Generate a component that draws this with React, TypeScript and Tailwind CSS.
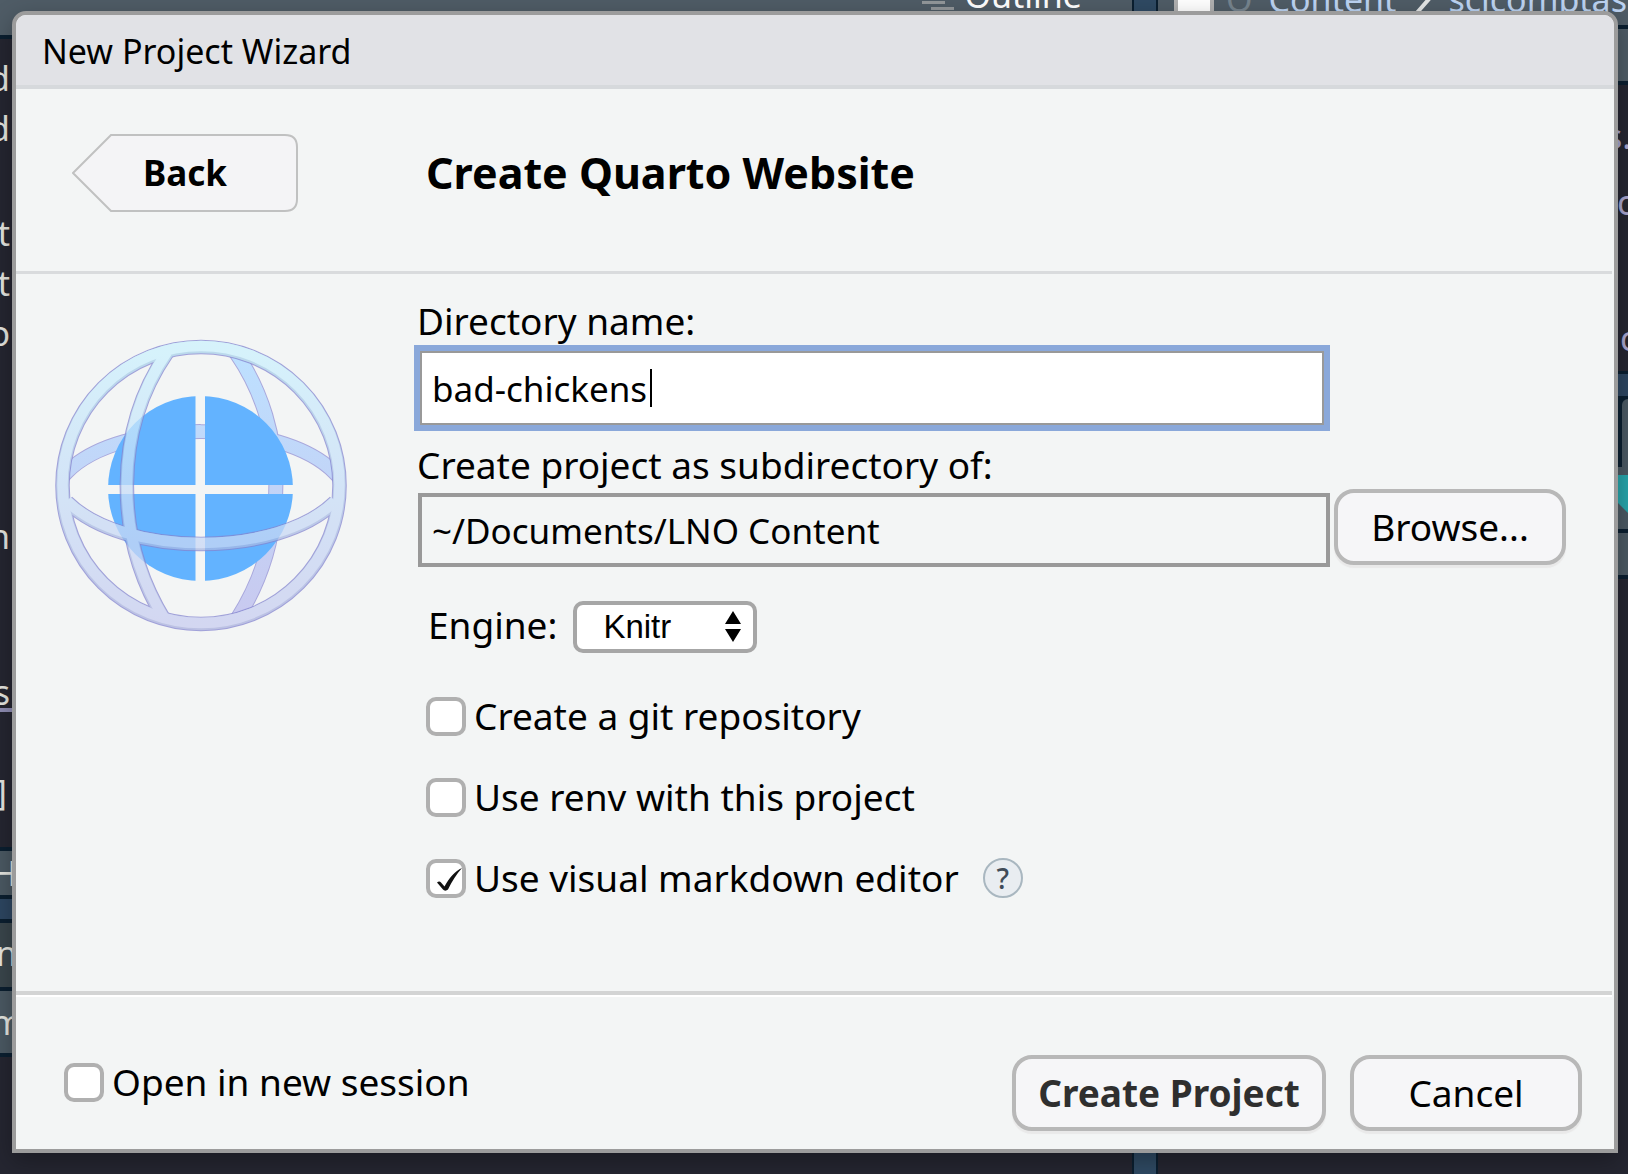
import React, { useState } from "react";

const FRONT_BANDS = (
  <>
    <circle cx="161" cy="165.5" r="138.5" />
    <path d="M127 33C74 110 74 217 124 299" />
    <path d="M27 182C84 238 238 238 295 182" />
  </>
);

const BACK_BANDS = (
  <>
    <path d="M196 33C249 110 249 217 197 299" />
    <path d="M27 152C80 98 242 98 295 153" />
  </>
);

function GlobeLogo() {
  return (
    <svg viewBox="0 0 320 320" className="w-80 shrink-0" role="img" aria-label="Quarto website">
      <defs>
        <linearGradient id="front" gradientUnits="userSpaceOnUse" x1="0" y1="20" x2="0" y2="311">
          <stop offset="0" stopColor="#cdf3fe" />
          <stop offset="0.5" stopColor="#c9dff8" />
          <stop offset="1" stopColor="#c9cdf0" />
        </linearGradient>
        <linearGradient id="frontShade" gradientUnits="userSpaceOnUse" x1="0" y1="20" x2="0" y2="311">
          <stop offset="0" stopColor="#a9d2ea" />
          <stop offset="0.5" stopColor="#a9bfe6" />
          <stop offset="1" stopColor="#aab0de" />
        </linearGradient>
        <linearGradient id="back" gradientUnits="userSpaceOnUse" x1="0" y1="35" x2="0" y2="300">
          <stop offset="0" stopColor="#bde0ff" />
          <stop offset="0.5" stopColor="#c2d4f7" />
          <stop offset="1" stopColor="#c9c9ef" />
        </linearGradient>
        <clipPath id="disc">
          <circle cx="160.5" cy="168.5" r="92.5" />
        </clipPath>
        <clipPath id="inside">
          <circle cx="161" cy="165.5" r="132" />
        </clipPath>
      </defs>
      <g fill="none" strokeLinecap="square" clipPath="url(#inside)">
        <g stroke="#a9a8dc" strokeWidth="15">{BACK_BANDS}</g>
        <g stroke="url(#back)" strokeWidth="13">{BACK_BANDS}</g>
      </g>
      <g fill="#63b3ff" clipPath="url(#disc)">
        <rect x="60" y="70" width="95.5" height="95" />
        <rect x="165" y="70" width="95" height="95" />
        <rect x="60" y="174" width="95.5" height="95" />
        <rect x="165" y="174" width="95" height="95" />
      </g>
      <g fill="none" opacity="0.75">
        <g stroke="#8585d0" strokeWidth="14.5">{FRONT_BANDS}</g>
        <g stroke="url(#frontShade)" strokeWidth="12.5">{FRONT_BANDS}</g>
        <g stroke="url(#front)" strokeWidth="10.5" transform="translate(0 -1)">{FRONT_BANDS}</g>
      </g>
    </svg>
  );
}

type CheckProps = {
  id: string;
  label: string;
  defaultChecked?: boolean;
};

function Check({ id, label, defaultChecked }: CheckProps) {
  return (
    <div className="flex h-12 items-center gap-2">
      <span className="relative h-[39px] w-10">
        <input
          id={id}
          type="checkbox"
          defaultChecked={defaultChecked}
          className="peer block size-full appearance-none rounded-[10px] border-4 border-[#b0b0b0] bg-white"
        />
        <svg
          viewBox="0 0 40 39"
          className="pointer-events-none absolute inset-0 hidden peer-checked:block"
          aria-hidden="true"
        >
          <path
            d="M11 23.5C12.5 22 14 22 15 23.5L18.500 27.500C23 19 29 12 36 9C30.500 15 26 22.500 22 30.500C20.500 32 18 32 17 30.500Z"
            fill="#111"
          />
        </svg>
      </span>
      <label htmlFor={id} className="text-[37px] leading-[48px]">
        {label}
      </label>
    </div>
  );
}

function Fragment({ text, className = "" }: { text: string; className?: string }) {
  return (
    <div className={`flex justify-end overflow-hidden text-[34px] leading-[50px] ${className}`}>
      <span>{text}</span>
    </div>
  );
}

function Backdrop() {
  return (
    <div className="flex min-h-screen bg-[#252631] text-[#e6e6e0]" aria-hidden="true">
      <div className="flex flex-1 flex-col">
        <div className="h-[39px] overflow-hidden border-b-4 border-[#0b1f30] bg-[#4f5c66]">
          <div className="-mt-[30px] flex items-center justify-end gap-2 pr-[50px]">
            <svg viewBox="0 0 34 24" className="mt-[20px] h-6 w-[34px]">
              <path d="M0 9.500H23M9 15.500H32" stroke="#92979a" strokeWidth="3" />
            </svg>
            <span className="text-[34px] leading-[50px] text-white">Outline</span>
          </div>
        </div>
        <div className="flex w-[10px] flex-col">
          <Fragment text="d" className="mt-[14px]" />
          <Fragment text="d" />
          <Fragment text="t" className="mt-[55px]" />
          <Fragment text="t" />
          <Fragment text="o" />
          <Fragment text="n" className="mt-[153px]" />
          <Fragment text="s" className="mt-[106px]" />
        </div>
        <div className="-mt-[9px] h-1 bg-[#8f8db3]" />
        <div className="mt-[55px] flex w-[7px] flex-col">
          <Fragment text="]" />
        </div>
        <div className="mt-[30px] h-1 bg-[#0b1f30]" />
        <div className="flex h-11 items-center bg-[#4b5963] text-[34px] leading-[44px]">
          <span className="-ml-2">H</span>
        </div>
        <div className="h-7 border-y-4 border-[#0b1f30] bg-[#2d4661]" />
        <div className="h-16 bg-[#3a464c] text-[34px] leading-[60px]">
          <span className="-ml-1">n</span>
        </div>
        <div className="h-[70px] border-y-4 border-[#0b1f30] bg-[#4b5963] text-[34px] leading-[62px]">
          <span className="-ml-[9px]">m</span>
        </div>
      </div>

      <div className="w-[26px] border-x-2 border-[#0b1f30] bg-[#2f4a63]" />

      <div className="flex w-[470px] flex-col overflow-hidden">
        <div className="h-[29px] overflow-hidden border-b-4 border-[#0b1f30] bg-[#4f5c66]">
          <div className="-mt-[26px] flex w-max items-center gap-4 pl-4 text-[34px] leading-[50px] text-[#bcd3f2]">
            <span className="size-10 rounded-lg border-4 border-[#b0b0b0] bg-white" />
            <span className="-ml-1 text-[#76848e]">O</span>
            <span>Content</span>
            <svg viewBox="0 0 20 36" className="h-9 w-5">
              <path d="M4 2L17 18L3 34" fill="none" stroke="#e4e6e6" strokeWidth="4" />
            </svg>
            <span>scicomptasks</span>
          </div>
        </div>
        <div className="h-14 border-b-4 border-[#0b1f30] bg-[#4f5c66]" />
        <div className="flex h-[286px] flex-col items-end gap-4 pt-[26px] text-[34px] leading-[50px] text-[#a9a6cf]">
          <div className="w-[10px] overflow-hidden">
            <span className="-ml-3">s.</span>
          </div>
          <span className="w-[11px] overflow-hidden">c</span>
          <span className="mt-[70px] w-2 overflow-hidden">c</span>
        </div>
        <div className="h-7 border-y-[3px] border-[#0b1f30] bg-[#2d4661]" />
        <div className="flex h-[134px] flex-col items-end border-b-4 border-[#0b1f30] bg-[#4b5963]">
          <div className="flex h-[68px] w-[10px] bg-[#0b1f30] pl-1">
            <span className="flex-1 rounded-tl-md bg-[#4b5963]" />
          </div>
          <svg viewBox="0 0 10 38" className="mt-2 h-[38px] w-[10px]">
            <path d="M0 0H10V38L0 28Z" fill="#27a5ab" />
          </svg>
        </div>
        <div className="h-[46px] border-b-4 border-[#0b1f30] bg-[#4b5963]" />
      </div>
    </div>
  );
}

const pushButton =
  "h-[76px] rounded-[20px] border-4 border-[#b8b8b8] bg-[#f6f6f8] text-[37px] leading-[46px] shadow-[0_3px_1px_#e9e9e9]";

export default function App() {
  const [name, setName] = useState("bad-chickens");

  return (
    <div className="relative overflow-hidden font-['Noto_Sans','Open_Sans',sans-serif] text-black">
      <Backdrop />

      <div className="absolute inset-0 flex pt-[11px] pr-[10px] pb-[21px] pl-3">
        <div
          role="dialog"
          aria-labelledby="wizard-title"
          className="flex flex-1 flex-col overflow-hidden rounded-t-[14px] border-4 border-[#9c9c9c] bg-[#f3f5f5] shadow-[0_8px_24px_rgba(0,0,0,0.3)]"
        >
          <div className="h-[74px] border-b-4 border-[#d6d9dc] bg-[#e1e2e6] pl-[26px]">
            <span id="wizard-title" className="text-[34px] leading-[72px]">
              New Project Wizard
            </span>
          </div>

          <header className="mr-0.5 flex h-[185px] items-start border-b-[3px] border-[#d9dbdd] pt-[45px] pl-14">
            <button type="button" className="relative h-[78px] w-[226px] text-[35px] leading-[76px] font-bold">
              <svg viewBox="0 0 226 78" className="absolute inset-0" aria-hidden="true">
                <path
                  d="M1 39L39 1H213Q225 1 225 13V65Q225 77 213 77H39Z"
                  fill="#f4f4f6"
                  stroke="#c0c1c1"
                  strokeWidth="2"
                />
              </svg>
              <span className="relative">Back</span>
            </button>
            <h1 className="ml-32 text-[43px] leading-[78px] font-bold">Create Quarto Website</h1>
          </header>

          <main className="flex flex-1 items-start pr-12">
            <div className="w-[398px] shrink-0 pt-[46px] pl-6">
              <GlobeLogo />
            </div>

            <div className="min-w-0 flex-1 pt-[23px]">
              <div className="grid grid-cols-[1fr_232px] gap-x-1">
                <label htmlFor="dir-name" className="col-span-2 pl-[3px] text-[37px] leading-[48px]">
                  Directory name:
                </label>
                <div className="relative border-[6px] border-[#8aa8da]">
                  <input
                    id="dir-name"
                    type="text"
                    value={name}
                    onChange={(e) => setName(e.target.value)}
                    className="block h-[74px] w-full border-2 border-[#999] bg-white pl-2.5 text-[35px] leading-[48px] outline-none"
                  />
                  <span className="absolute top-[18px] left-[230px] h-[38px] w-0.5 bg-black" />
                </div>
                <label htmlFor="parent-dir" className="col-span-2 mt-2.5 pl-[3px] text-[37px] leading-[48px]">
                  Create project as subdirectory of:
                </label>
                <input
                  id="parent-dir"
                  type="text"
                  readOnly
                  value="~/Documents/LNO Content"
                  className="mt-1 ml-1 h-[74px] border-4 border-[#999] bg-[#f3f5f5] pl-2.5 text-[35px] leading-[48px] outline-none"
                />
                <button type="button" className={pushButton}>
                  Browse...
                </button>
              </div>

              <div className="mt-[34px] flex items-start gap-4 pl-3.5">
                <label htmlFor="engine" className="text-[37px] leading-[48px]">
                  Engine:
                </label>
                <span className="relative">
                  <select
                    id="engine"
                    className="block h-[52px] w-[184px] appearance-none rounded-[10px] border-4 border-[#a6a6a6] bg-white pl-[26px] font-['Liberation_Sans',sans-serif] text-[33px] leading-[44px]"
                  >
                    <option>Knitr</option>
                    <option>Jupyter</option>
                    <option>None</option>
                  </select>
                  <svg
                    viewBox="0 0 16 32"
                    className="pointer-events-none absolute top-[10px] right-4 h-8 w-4"
                    aria-hidden="true"
                  >
                    <path d="M8 0L16 13H0ZM0 18H16L8 31Z" />
                  </svg>
                </span>
              </div>

              <div className="mt-[39px] flex flex-col gap-[33px] pl-3">
                <Check id="git" label="Create a git repository" />
                <Check id="renv" label="Use renv with this project" />
                <div className="flex items-center gap-6">
                  <Check id="visual" label="Use visual markdown editor" defaultChecked />
                  <button
                    type="button"
                    aria-label="Help"
                    className="size-10 rounded-full border-2 border-[#a9b7c0] bg-[#e9edf1] text-[28px] leading-9 font-medium text-[#414c58]"
                  >
                    ?
                  </button>
                </div>
              </div>
            </div>
          </main>

          <footer className="mr-0.5 border-t-4 border-[#d3d4d4]">
            <div className="flex h-[154px] items-start justify-between border-t-2 border-white pr-[30px] pl-12">
              <div className="pt-[61px]">
                <Check id="session" label="Open in new session" />
              </div>
              <div className="flex gap-6 pt-[58px]">
                <button type="button" className={`${pushButton} w-[314px] font-bold text-[#2f2f2f]`}>
                  Create Project
                </button>
                <button type="button" className={`${pushButton} w-[232px]`}>
                  Cancel
                </button>
              </div>
            </div>
          </footer>
        </div>
      </div>
    </div>
  );
}
